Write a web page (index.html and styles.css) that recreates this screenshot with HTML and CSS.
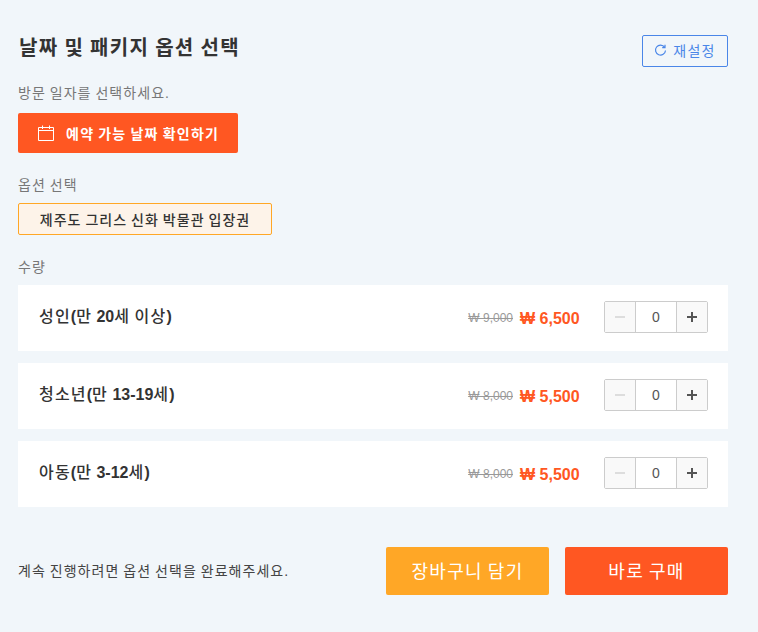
FILE: index.html
```html
<!DOCTYPE html>
<html lang="ko">
<head>
<meta charset="utf-8">
<title>날짜 및 패키지 옵션 선택</title>
<link rel="stylesheet" href="styles.css">
</head>
<body>
<main class="panel">
  <header class="head">
    <h2 class="title">날짜 및 패키지 옵션 선택</h2>
    <button class="reset" type="button">
      <svg class="reset-icon" width="13" height="13" viewBox="0 0 13 13" fill="none" stroke="#4a86e8" stroke-width="1.2"><path d="M10.6 3.2A5 5 0 1 0 11.5 6.5"/><path d="M11 .8v2.8H8.2"/></svg>
      재설정
    </button>
  </header>
  <p class="label first">방문 일자를 선택하세요.</p>
  <button class="date-btn" type="button">
    <svg width="16" height="16" viewBox="0 0 16 16" fill="none" stroke="#fff" stroke-width="1"><path d="M.5 2.5h15v13H.5zM.5 5.5h15M4.5 .5v3.5M11.5 .5v3.5"/></svg>
    예약 가능 날짜 확인하기
  </button>
  <p class="label option-label">옵션 선택</p>
  <div class="chip">제주도 그리스 신화 박물관 입장권</div>
  <p class="label qty-label">수량</p>
  <section class="rows">
    <div class="row">
      <span class="name">성인<b class="num">(</b>만 <b class="num">20</b>세 이상<b class="num">)</b></span>
      <span class="old">₩ 9,000</span><span class="price">₩ 6,500</span>
      <div class="stepper">
        <span class="step"><svg class="minus" width="10" height="10" viewBox="0 0 10 10"><path d="M0 5h10"/></svg></span>
        <span class="count">0</span>
        <span class="step"><svg class="plus" width="10" height="10" viewBox="0 0 10 10"><path d="M0 5h10M5 0v10"/></svg></span>
      </div>
    </div>
    <div class="row">
      <span class="name">청소년<b class="num">(</b>만 <b class="num">13-19</b>세<b class="num">)</b></span>
      <span class="old">₩ 8,000</span><span class="price">₩ 5,500</span>
      <div class="stepper">
        <span class="step"><svg class="minus" width="10" height="10" viewBox="0 0 10 10"><path d="M0 5h10"/></svg></span>
        <span class="count">0</span>
        <span class="step"><svg class="plus" width="10" height="10" viewBox="0 0 10 10"><path d="M0 5h10M5 0v10"/></svg></span>
      </div>
    </div>
    <div class="row">
      <span class="name">아동<b class="num">(</b>만 <b class="num">3-12</b>세<b class="num">)</b></span>
      <span class="old">₩ 8,000</span><span class="price">₩ 5,500</span>
      <div class="stepper">
        <span class="step"><svg class="minus" width="10" height="10" viewBox="0 0 10 10"><path d="M0 5h10"/></svg></span>
        <span class="count">0</span>
        <span class="step"><svg class="plus" width="10" height="10" viewBox="0 0 10 10"><path d="M0 5h10M5 0v10"/></svg></span>
      </div>
    </div>
  </section>
  <footer class="foot">
    <p class="notice">계속 진행하려면 옵션 선택을 완료해주세요.</p>
    <button class="cta cart" type="button">장바구니 담기</button>
    <button class="cta buy" type="button">바로 구매</button>
  </footer>
</main>
</body>
</html>
```
FILE: styles.css
```css
* { box-sizing: border-box; }
html, body { margin: 0; height: 100%; }
body {
  background: #f1f6fa;
  color: #333;
  font-family: "Liberation Sans", "Noto Sans CJK KR", sans-serif;
  letter-spacing: .08em;
  word-spacing: -.08em;
  overflow: hidden;
}
button { font-family: inherit; letter-spacing: inherit; word-spacing: inherit; cursor: pointer; }
p, h2 { margin: 0; }
.panel { width: 710px; margin-left: 18px; padding-top: 35px; }
.head { display: flex; justify-content: space-between; align-items: flex-start; height: 32px; }
.title { font-size: 20px; line-height: 24px; font-weight: 700; word-spacing: -.04em; color: #333; margin: 1px 0 0 1px; }
.reset {
  width: 86px; height: 32px; padding: 0 0 2px;
  display: flex; align-items: center; justify-content: center; gap: 6px;
  background: transparent; border: 1px solid #4a86e8; border-radius: 2px;
  color: #4a86e8; font-size: 14px;
}
.label { font-size: 14px; line-height: 20px; letter-spacing: .075em; word-spacing: -.075em; color: #777; }
.first { margin-top: 15px; padding-top: 1px; height: 20px; }
.date-btn {
  margin-top: 11px; width: 220px; height: 40px; padding: 0 0 0 20px;
  display: flex; align-items: center; gap: 12px;
  background: #ff5722; border: 0; border-radius: 2px;
  color: #fff; font-size: 14px; font-weight: 700;
}
.option-label { margin-top: 22px; }
.chip {
  margin-top: 8px; width: 254px; height: 32px;
  display: flex; align-items: center; justify-content: center;
  background: #fdf3e9; border: 1px solid #ffa726; border-radius: 2px;
  font-size: 14px; font-weight: 500; letter-spacing: .075em; word-spacing: -.075em; color: #333;
}
.qty-label { margin-top: 22px; }
.rows { margin-top: 8px; display: flex; flex-direction: column; gap: 12px; }
.row {
  height: 66px; padding: 0 20px 0 21px;
  display: flex; align-items: center;
  background: #fff;
}
.name { font-size: 16px; font-weight: 500; letter-spacing: .075em; color: #333; margin-right: auto; margin-bottom: 6px; }
.num { font-weight: 700; letter-spacing: 0; word-spacing: 0; }
.old { font-size: 12px; color: #999; letter-spacing: 0; word-spacing: 0; text-decoration: line-through; margin-right: 7px; }
.price { font-size: 16px; font-weight: 700; letter-spacing: 0; word-spacing: 0; color: #ff5722; width: 60px; margin: 1px 24px 0 0; }
.stepper { display: flex; height: 32px; width: 104px; margin-bottom: 2px; border: 1px solid #ccc; border-radius: 2px; }
.step {
  width: 30px; display: flex; align-items: center; justify-content: center;
  background: #f9f9f9;
}
.step svg { fill: none; stroke-width: 2; }
.minus { stroke: #ddd; }
.plus { stroke: #555; }
.count {
  flex: 1; display: flex; align-items: center; justify-content: center;
  background: #fff; border-left: 1px solid #ccc; border-right: 1px solid #ccc;
  font-size: 14px; letter-spacing: 0; color: #555;
}
.foot { margin-top: 40px; display: flex; align-items: center; }
.notice { font-size: 14px; letter-spacing: .075em; word-spacing: -.075em; color: #444; margin-right: auto; padding-bottom: 3px; }
.cta {
  width: 163px; height: 48px; padding: 0 0 3px; border: 0; border-radius: 2px;
  color: #fff; font-size: 18px;
}
.cart { background: #ffa726; margin-right: 16px; }
.buy { background: #ff5722; }
```
